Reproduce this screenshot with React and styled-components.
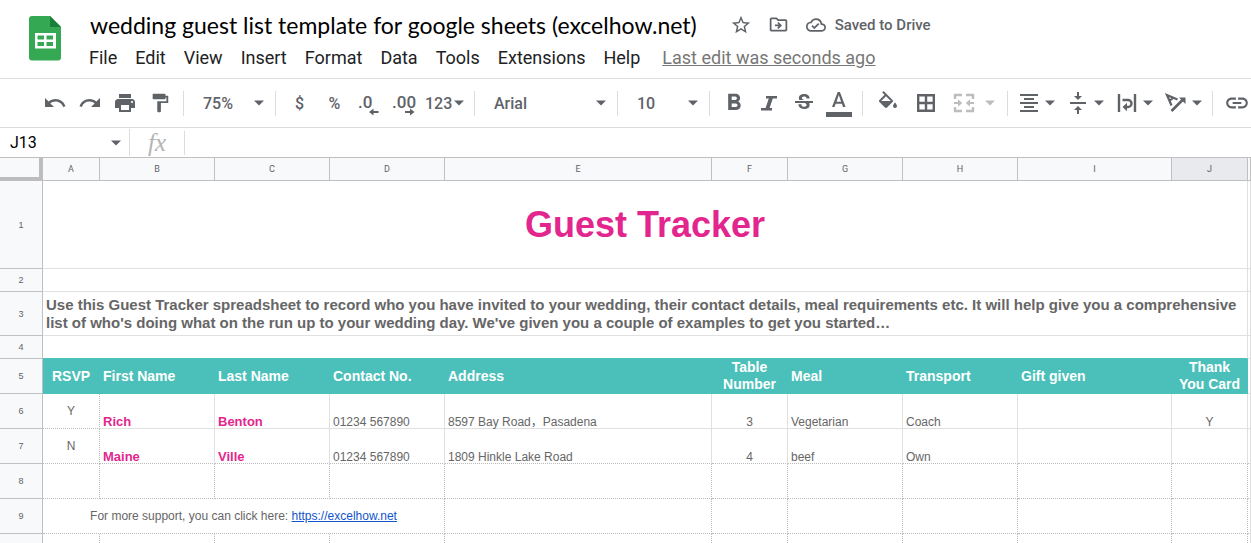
import React from "react";
import styled, { createGlobalStyle, css } from "styled-components";
import {
  MdStarBorder,
  MdOutlineDriveFileMove,
  MdOutlineCloudDone,
  MdUndo,
  MdRedo,
  MdPrint,
  MdFormatPaint,
  MdFormatBold,
  MdStrikethroughS,
  MdFormatAlignCenter,
  MdVerticalAlignCenter,
  MdLink,
} from "react-icons/md";

const ui = 'Roboto, "Liberation Sans", sans-serif';
const sheet = '"Liberation Sans", Arial, "Noto Sans CJK SC", sans-serif';
const grey = "#5f6368";
const line = "#dadce0";
const grid = "#e0e0e0";
const teal = "#4bbfb9";
const pink = "#e3268e";

const GlobalStyle = createGlobalStyle`
  *, *::before, *::after { box-sizing: border-box; }
  body { margin: 0; background: #fff; font-family: ${ui}; }
  button, input, select { font: inherit; color: inherit; margin: 0; }
`;

const Page = styled.div`
  display: flex;
  flex-direction: column;
  height: 100vh;
  overflow: hidden;
`;

const Header = styled.header`
  display: flex;
  align-items: flex-start;
  gap: 18px;
  padding: 10px 0 7px 28px;
`;

const Logo = styled.svg`
  flex: none;
  width: 34px;
  height: 46px;
  margin-top: 5px;
`;

const HeaderText = styled.div`
  display: flex;
  flex-direction: column;
  white-space: nowrap;
`;

const TitleRow = styled.div`
  display: flex;
  align-items: center;
  height: 29px;
  gap: 8px;
  padding-left: 10px;
  color: ${grey};
`;

const DocTitle = styled.h1`
  margin: 0 22px 0 0;
  font-family: Lato, ${ui};
  font-size: 23px;
  line-height: 30px;
  font-weight: 400;
  color: #000;
`;

const HeaderButton = styled.button`
  display: flex;
  align-items: center;
  justify-content: center;
  width: 29px;
  height: 28px;
  padding: 0;
  border: 0;
  background: none;
`;

const SaveState = styled.span`
  display: flex;
  align-items: center;
  gap: 9px;
  margin-left: 5px;
  font-size: 15px;
  line-height: 28px;
  font-weight: 500;
`;

const MenuBar = styled.nav`
  display: flex;
  align-items: center;
  height: 32px;
`;

const MenuItem = styled.button`
  padding: 6px 9px 0;
  border: 0;
  background: none;
  font-size: 18px;
  line-height: 24px;
  color: #202124;
`;

const LastEdit = styled.a`
  margin-left: 13px;
  padding-top: 6px;
  font-size: 18px;
  line-height: 24px;
  color: #777;
`;

const Toolbar = styled.div`
  display: flex;
  align-items: center;
  flex: none;
  height: 50px;
  padding-left: 37px;
  border-top: 1px solid ${line};
  border-bottom: 1px solid ${line};
  color: ${grey};
  overflow: hidden;
`;

const Tool = styled.button`
  display: flex;
  align-items: center;
  justify-content: center;
  flex: none;
  width: ${(p) => p.$width || 35}px;
  height: 34px;
  padding: 0;
  border: 0;
  background: none;
  font-size: 16px;
  font-weight: 500;
  color: ${(p) => (p.$faded ? "#bdbdbd" : grey)};
`;

const MenuTool = styled(Tool)`
  justify-content: flex-start;
  width: ${(p) => p.$width || 49}px;
  padding-left: ${(p) => p.$inset || 5}px;
  gap: ${(p) => p.$gap || 4}px;
`;

const Divider = styled.span`
  flex: none;
  width: 1px;
  height: 25px;
  margin: 0 ${(p) => (p.$tight ? 4 : 6)}px;
  background: ${line};
`;

const PickerBox = styled.label`
  position: relative;
  display: flex;
  align-items: center;
  flex: none;
  width: ${(p) => p.$width}px;
  height: 34px;

  svg {
    position: absolute;
    right: 5px;
    pointer-events: none;
  }
`;

const PickerSelect = styled.select`
  appearance: none;
  width: 100%;
  height: 100%;
  padding: 0 18px 0 13px;
  border: 0;
  background: none;
  font-size: 16px;
  font-weight: 500;
`;

const FormulaBar = styled.div`
  display: flex;
  align-items: center;
  flex: none;
  height: 29px;
`;

const NameBox = styled.div`
  display: flex;
  align-items: center;
  width: 130px;
  height: 27px;
  padding-right: 8px;
  border-right: 1px solid ${line};
  color: ${grey};
`;

const NameInput = styled.input`
  flex: 1;
  min-width: 0;
  padding: 0 0 0 10px;
  border: 0;
  outline: 0;
  background: none;
  font-size: 16px;
  color: #000;
`;

const FxLabel = styled.label`
  width: 55px;
  text-align: center;
  font-family: "Liberation Serif", serif;
  font-style: italic;
  font-size: 25px;
  line-height: 24px;
  color: #b4b4b4;
  border-right: 1px solid ${line};
`;

const FormulaInput = styled.input`
  flex: 1;
  border: 0;
  outline: 0;
  background: none;
  font-size: 16px;
`;

const Grid = styled.table`
  flex: none;
  width: 100%;
  min-width: 1248px;
  table-layout: fixed;
  border-collapse: separate;
  border-spacing: 0;
  font-family: ${sheet};
  font-size: 12px;
  line-height: 12px;
  color: #666;
`;

const Row = styled.tr`
  height: ${(p) => p.$height}px;
`;

const heading = css`
  padding: 0;
  background: #f8f9fa;
  font-family: ${ui};
  font-size: 9px;
  font-weight: 400;
  color: ${grey};
`;

const Corner = styled.td`
  ${heading}
  border: solid #bdbdbd;
  border-width: 1px 4px 4px 0;
`;

const ColHead = styled.th`
  ${heading}
  border: solid #c0c0c0;
  border-width: 1px 1px 1px 0;
  ${(p) => p.$active && "background: #e8eaed;"}
`;

const RowHead = styled.th`
  ${heading}
  font-family: ${sheet};
  border: solid #c0c0c0;
  border-width: 0 1px 1px 0;
`;

const edge = (kind) =>
  kind === "dotted" ? "1px dotted #bbb" : kind === "teal" ? `1px solid ${teal}` : `1px solid ${grid}`;

const Cell = styled.td`
  padding: 0 3px;
  border-right: ${(p) => edge(p.$right)};
  border-bottom: ${(p) => edge(p.$bottom)};
  text-align: ${(p) => p.$align || "left"};
  vertical-align: ${(p) => p.$valign || "bottom"};
`;

const SheetTitle = styled(Cell)`
  font-size: 36px;
  line-height: 42px;
  font-weight: 700;
  color: ${pink};
`;

const Intro = styled(Cell)`
  font-size: 15px;
  line-height: 18px;
  font-weight: 700;
`;

const FieldName = styled(Cell)`
  background: ${teal};
  color: #fff;
  font-size: 14px;
  line-height: 17px;
  font-weight: 700;
`;

const GuestName = styled(Cell)`
  font-weight: 700;
  font-size: 13px;
  color: ${pink};
`;

const Support = styled.a`
  color: #1155cc;
`;

const Caret = () => (
  <svg width="10" height="6" viewBox="0 0 10 6" aria-hidden="true">
    <path d="M0 .5h10l-5 5z" fill="currentColor" />
  </svg>
);

const SheetsLogo = () => (
  <Logo viewBox="0 0 34 46" aria-label="Sheets">
    <path d="M4 1H22l11 11v30.500a3 3 0 0 1-3 3H4a3 3 0 0 1-3-3V4a3 3 0 0 1 3-3z" fill="#34a853" />
    <path d="M22 1l11 11H22z" fill="#188038" />
    <path
      d="M7 18h21v15.500H7zM9.500 20.500v4h6.500v-4zM18.500 20.500v4H25v-4zM9.500 27v4h6.500v-4zM18.500 27v4H25v-4z"
      fill="#fff"
      fillRule="evenodd"
    />
  </Logo>
);

const DecimalIcon = ({ digits, more }) => (
  <svg width="28" height="28" viewBox="0 0 28 28" aria-hidden="true">
    <text x={more ? 1 : 2} y="19" fontSize="17" fontWeight="500" fill="currentColor">
      {digits}
    </text>
    {more ? (
      <path d="M14 22h5v-2.500l4.500 3.500-4.500 3.500V24h-5z" fill="currentColor" />
    ) : (
      <path d="M22.500 22h-5v-2.500L13 23l4.500 3.500V24h5z" fill="currentColor" />
    )}
  </svg>
);

const TextColorIcon = () => (
  <svg width="28" height="28" viewBox="0 0 28 28" aria-hidden="true">
    <path
      d="M12.700 3L7 18h2.500l1.200-3.200h6.200l1.200 3.200h2.500L14.900 3zM11.500 12.700L13.800 6l2.300 6.700z"
      fill="currentColor"
    />
    <path d="M1 23h26v5H1z" fill="currentColor" />
  </svg>
);

const ItalicIcon = () => (
  <svg width="24" height="24" viewBox="0 0 24 24" aria-hidden="true">
    <path d="M9 5h11v2.600h-4.200L12.600 17H15v2.600H4V17h4.600l3.200-9.400H9z" fill="currentColor" />
  </svg>
);

const FillIcon = () => (
  <svg width="24" height="24" viewBox="0 0 24 24" fill="currentColor" aria-hidden="true">
    <path d="M16.560 8.940L7.620 0 6.210 1.410l2.380 2.380-5.150 5.150c-.59.59-.59 1.540 0 2.120l5.500 5.500c.29.29.68.44 1.060.44s.77-.15 1.060-.44l5.500-5.500c.59-.58.59-1.530 0-2.120zM5.210 10L10 5.210 14.790 10H5.210zM19 11.500s-2 2.170-2 3.500c0 1.100.9 2 2 2s2-.9 2-2c0-1.330-2-3.500-2-3.500z" />
  </svg>
);

const BordersIcon = () => (
  <svg width="18" height="18" viewBox="0 0 18 18" aria-hidden="true">
    <path d="M1.200 1.200h15.600v15.600H1.200zM9 1v16M1 9h16" fill="none" stroke="currentColor" strokeWidth="2.400" />
  </svg>
);

const MergeIcon = () => (
  <svg width="22" height="20" viewBox="0 0 22 20" aria-hidden="true">
    <path
      d="M2 6V2h7M13 2h7v4M2 14v4h7M13 18h7v-4"
      fill="none"
      stroke="currentColor"
      strokeWidth="2.400"
    />
    <path d="M1 9h4V6.200L9.200 10 5 13.800V11H1zM21 9h-4V6.200L12.800 10l4.200 3.800V11h4z" fill="currentColor" />
  </svg>
);

const WrapIcon = () => (
  <svg width="20" height="22" viewBox="0 0 20 22" aria-hidden="true">
    <path
      d="M2 2v18M18 2v18M5.500 8H11a3.500 3.500 0 0 1 0 7H9"
      fill="none"
      stroke="currentColor"
      strokeWidth="2.400"
    />
    <path d="M10 10.800v8.400L5.500 15z" fill="currentColor" />
  </svg>
);

const RotateIcon = () => (
  <svg width="24" height="24" viewBox="0 0 24 24" aria-hidden="true">
    <path d="M7.500 14.500L3 4l10.500 4.500M5.200 10.200l4.500-4" fill="none" stroke="currentColor" strokeWidth="2.200" />
    <path d="M7.500 20L19 8.500" fill="none" stroke="currentColor" strokeWidth="2.600" />
    <path d="M15 6.500h6.500V13z" fill="currentColor" />
  </svg>
);

const Picker = ({ label, width, value }) => (
  <PickerBox $width={width}>
    <PickerSelect aria-label={label} defaultValue={value}>
      <option>{value}</option>
    </PickerSelect>
    <Caret />
  </PickerBox>
);

const menus = ["File", "Edit", "View", "Insert", "Format", "Data", "Tools", "Extensions", "Help"];

const columns = [
  ["A", 57],
  ["B", 115],
  ["C", 115],
  ["D", 115],
  ["E", 267],
  ["F", 76],
  ["G", 115],
  ["H", 115],
  ["I", 154],
  ["J", 76],
];

const fields = [
  "RSVP",
  "First Name",
  "Last Name",
  "Contact No.",
  "Address",
  "Table Number",
  "Meal",
  "Transport",
  "Gift given",
  "Thank You Card",
];

const guests = [
  ["Y", "Rich", "Benton", "01234 567890", "8597 Bay Road，Pasadena", "3", "Vegetarian", "Coach", "", "Y"],
  ["N", "Maine", "Ville", "01234 567890", "1809 Hinkle Lake Road", "4", "beef", "Own", "", ""],
];

const centred = (i) => (i === 0 || i === 5 || i === 9 ? "center" : "left");

const GuestRow = ({ number, guest, last }) => (
  <Row $height={35}>
    <RowHead scope="row">{number}</RowHead>
    {guest.map((text, i) => {
      const Kind = i === 1 || i === 2 ? GuestName : Cell;
      return (
        <Kind
          key={i}
          $right={i === 0 ? "dotted" : "solid"}
          $bottom={i === 0 || last ? "dotted" : "solid"}
          $align={centred(i)}
          $valign={i === 0 ? "middle" : "bottom"}
        >
          {text}
        </Kind>
      );
    })}
    <Cell $bottom={last ? "dotted" : "solid"} />
  </Row>
);

const BlankCells = ({ from = 0 }) =>
  columns.slice(from).map(([name]) => <Cell key={name} $right="dotted" $bottom="dotted" />);

export default function App() {
  return (
    <Page>
      <GlobalStyle />
      <Header>
        <SheetsLogo />
        <HeaderText>
          <TitleRow>
            <DocTitle>wedding guest list template for google sheets (excelhow.net)</DocTitle>
            <HeaderButton aria-label="Star">
              <MdStarBorder size={22} />
            </HeaderButton>
            <HeaderButton aria-label="Move">
              <MdOutlineDriveFileMove size={21} />
            </HeaderButton>
            <SaveState>
              <MdOutlineCloudDone size={20} />
              Saved to Drive
            </SaveState>
          </TitleRow>
          <MenuBar>
            {menus.map((name) => (
              <MenuItem key={name}>{name}</MenuItem>
            ))}
            <LastEdit href="#history">Last edit was seconds ago</LastEdit>
          </MenuBar>
        </HeaderText>
      </Header>

      <Toolbar role="toolbar" aria-label="Formatting">
        <Tool aria-label="Undo"><MdUndo size={24} /></Tool>
        <Tool aria-label="Redo"><MdRedo size={24} /></Tool>
        <Tool aria-label="Print"><MdPrint size={24} /></Tool>
        <Tool aria-label="Paint format"><MdFormatPaint size={22} /></Tool>
        <Divider />
        <Picker label="Zoom" width={79} value="75%" />
        <Divider />
        <Tool>$</Tool>
        <Tool>%</Tool>
        <Tool aria-label="Decrease decimal places"><DecimalIcon digits=".0" /></Tool>
        <Tool aria-label="Increase decimal places"><DecimalIcon digits=".00" more /></Tool>
        <MenuTool $width={46} $inset={3} $gap={2}>123<Caret /></MenuTool>
        <Divider />
        <Picker label="Font" width={130} value="Arial" />
        <Divider />
        <Picker label="Font size" width={79} value="10" />
        <Divider />
        <Tool aria-label="Bold"><MdFormatBold size={28} /></Tool>
        <Tool aria-label="Italic"><ItalicIcon /></Tool>
        <Tool aria-label="Strikethrough"><MdStrikethroughS size={24} /></Tool>
        <Tool aria-label="Text color"><TextColorIcon /></Tool>
        <Divider />
        <Tool $width={38} aria-label="Fill color"><FillIcon /></Tool>
        <Tool $width={38} aria-label="Borders"><BordersIcon /></Tool>
        <MenuTool $width={58} $inset={8} $gap={10} $faded aria-label="Merge cells"><MergeIcon /><Caret /></MenuTool>
        <Divider $tight />
        <MenuTool aria-label="Horizontal align"><MdFormatAlignCenter size={24} /><Caret /></MenuTool>
        <MenuTool aria-label="Vertical align"><MdVerticalAlignCenter size={24} /><Caret /></MenuTool>
        <MenuTool $inset={7} $gap={6} aria-label="Text wrapping"><WrapIcon /><Caret /></MenuTool>
        <MenuTool aria-label="Text rotation"><RotateIcon /><Caret /></MenuTool>
        <Divider $tight />
        <Tool $width={40} aria-label="Insert link"><MdLink size={26} /></Tool>
      </Toolbar>

      <FormulaBar>
        <NameBox>
          <NameInput aria-label="Name box" defaultValue="J13" />
          <Caret />
        </NameBox>
        <FxLabel htmlFor="formula">fx</FxLabel>
        <FormulaInput id="formula" />
      </FormulaBar>

      <Grid>
        <colgroup>
          <col width="43" />
          {columns.map(([name, width]) => (
            <col key={name} width={width} />
          ))}
          <col />
        </colgroup>
        <thead>
          <Row $height={24}>
            <Corner />
            {columns.map(([name]) => (
              <ColHead key={name} scope="col" $active={name === "J"}>
                {name}
              </ColHead>
            ))}
            <ColHead />
          </Row>
        </thead>
        <tbody>
          <Row $height={88}>
            <RowHead scope="row">1</RowHead>
            <SheetTitle colSpan={10} $align="center" $valign="middle">Guest Tracker</SheetTitle>
            <Cell />
          </Row>
          <Row $height={23}>
            <RowHead scope="row">2</RowHead>
            <Cell colSpan={10} />
            <Cell />
          </Row>
          <Row $height={44}>
            <RowHead scope="row">3</RowHead>
            <Intro colSpan={10} $valign="middle">
              Use this Guest Tracker spreadsheet to record who you have invited to your wedding, their
              contact details, meal requirements etc. It will help give you a comprehensive list of
              who's doing what on the run up to your wedding day. We've given you a couple of examples
              to get you started…
            </Intro>
            <Cell />
          </Row>
          <Row $height={23}>
            <RowHead scope="row">4</RowHead>
            <Cell colSpan={10} $bottom="teal" />
            <Cell />
          </Row>
          <Row $height={35}>
            <RowHead scope="row">5</RowHead>
            {fields.map((name, i) => (
              <FieldName key={name} $right="teal" $bottom="teal" $align={centred(i)} $valign="middle">
                {name}
              </FieldName>
            ))}
            <Cell />
          </Row>
          <GuestRow number={6} guest={guests[0]} />
          <GuestRow number={7} guest={guests[1]} last />
          <Row $height={35}>
            <RowHead scope="row">8</RowHead>
            <BlankCells />
            <Cell $bottom="dotted" />
          </Row>
          <Row $height={35}>
            <RowHead scope="row">9</RowHead>
            <Cell colSpan={4} $right="dotted" $bottom="dotted" $align="center" $valign="middle">
              For more support, you can click here:{" "}
              <Support href="https://excelhow.net">https://excelhow.net</Support>
            </Cell>
            <BlankCells from={4} />
            <Cell $bottom="dotted" />
          </Row>
          <Row $height={35}>
            <RowHead scope="row" />
            <BlankCells />
            <Cell $bottom="dotted" />
          </Row>
        </tbody>
      </Grid>
    </Page>
  );
}
